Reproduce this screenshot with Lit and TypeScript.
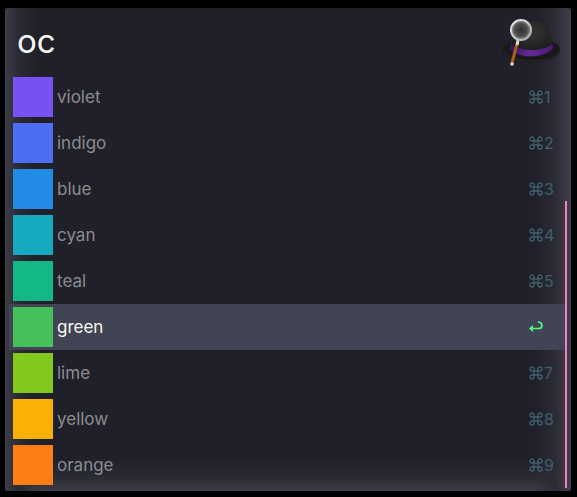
import { LitElement, html, css, svg } from "lit";
import { customElement, property, state } from "lit/decorators.js";
import { classMap } from "lit/directives/class-map.js";
import { styleMap } from "lit/directives/style-map.js";

interface Swatch {
  name: string;
  color: string;
}

const SWATCHES: Swatch[] = [
  { name: "violet", color: "#7950f2" },
  { name: "indigo", color: "#4c6ef5" },
  { name: "blue", color: "#228be6" },
  { name: "cyan", color: "#15aabf" },
  { name: "teal", color: "#12b886" },
  { name: "green", color: "#44c15a" },
  { name: "lime", color: "#82c91e" },
  { name: "yellow", color: "#fab005" },
  { name: "orange", color: "#fd7e14" },
];

const hatLogo = svg`
  <defs>
    <radialGradient id="crown" cx="0.5" cy="0.35" r="0.7">
      <stop offset="0" stop-color="#343635" />
      <stop offset="1" stop-color="#1a1b1b" />
    </radialGradient>
    <linearGradient id="band" x1="0" x2="1">
      <stop offset="0" stop-color="#3c1467" />
      <stop offset="0.45" stop-color="#652893" />
      <stop offset="1" stop-color="#491a76" />
    </linearGradient>
    <radialGradient id="lens">
      <stop offset="0" stop-color="#303030" />
      <stop offset="0.6" stop-color="#4c4c4c" />
      <stop offset="1" stop-color="#7c7c7c" />
    </radialGradient>
    <linearGradient id="rim" x1="0" y1="0" x2="1" y2="1">
      <stop offset="0" stop-color="#ececec" />
      <stop offset="1" stop-color="#a8a8a8" />
    </linearGradient>
  </defs>
  <path d="M4 38C4 34 8 31 13 30H53C58 31 61 34 61 38C61 45 48 50 33 50C17 50 4 45 4 38Z" fill="#181818" />
  <path d="M5 39C7 45 19 49 33 49C46 49 58 45 60 39" fill="none" stroke="#2b2c2c" stroke-width="1" />
  <path d="M12 34C13 18 20 9 33 9C46 9 53 17 53 33C46 42 19 42 12 34Z" fill="url(#crown)" />
  <path d="M12 32C21 40 44 40 53 32L54 36C46 47 19 47 11 37Z" fill="url(#band)" />
  <path d="M18 31L13 52" stroke="#2c170b" stroke-width="4" stroke-linecap="round" />
  <path d="M18 32L13 51" stroke="#a65f25" stroke-width="3" />
  <path d="M19 28L18 33" stroke="#dedede" stroke-width="3" />
  <circle cx="13" cy="52" r="1.8" fill="#dddddd" />
  <circle cx="22" cy="18" r="10" fill="url(#lens)" stroke="url(#rim)" stroke-width="2" />
  <circle cx="22" cy="18" r="8.6" fill="none" stroke="#8a8a8a" stroke-width="0.8" />
`;

@customElement("result-row")
class ResultRow extends LitElement {
  @property() name = "";
  @property() color = "";
  @property({ type: Number }) index = 1;
  @property({ type: Boolean }) selected = false;

  static styles = css`
    :host {
      display: block;
    }
    .row {
      display: flex;
      align-items: center;
      width: 100%;
      height: 46px;
      padding: 0 12px 0 4px;
      gap: 4px;
      border: 0;
      background: none;
      color: #8c8c8e;
      font: 17px/24px Inter, "Liberation Sans", sans-serif;
      text-align: left;
    }
    .selected {
      background: #414454;
      color: #f8f8f2;
    }
    .chip {
      width: 40px;
      height: 40px;
    }
    .name {
      flex: 1;
    }
    .shortcut {
      display: flex;
      align-items: center;
      gap: 1px;
      width: 24px;
      color: #40606c;
      font-size: 16px;
    }
    .selected .shortcut {
      color: #50fa7b;
    }
    .icon {
      flex: none;
      fill: none;
      stroke: currentColor;
    }
  `;

  render() {
    return html`
      <button class=${classMap({ row: true, selected: this.selected })}>
        <span class="chip" style=${styleMap({ background: this.color })}></span>
        <span class="name">${this.name}</span>
        <span class="shortcut">${this.selected ? this.enter() : this.command()}</span>
      </button>
    `;
  }

  private enter() {
    return html`<svg class="icon" width="15" height="14" viewBox="0 0 15 14" aria-label="Return">
      <path d="M9.5 2C14 2.5 14 8.5 9.5 8.5H3" stroke-width="1.7" stroke-linecap="round" />
      <path d="M0 8.5L4 5V12Z" fill="currentColor" stroke="none" />
    </svg>`;
  }

  private command() {
    return html`<svg class="icon" width="14" height="14" viewBox="0 0 14 14" aria-label="Command">
        <path
          d="M5 5V3A2 2 0 1 0 3 5H11A2 2 0 1 0 9 3V11A2 2 0 1 0 11 9H3A2 2 0 1 0 5 11Z"
          stroke-width="1.3"
        /></svg
      ><span>${this.index}</span>`;
  }
}

@customElement("app-root")
class AppRoot extends LitElement {
  @state() private selected = 5;

  static styles = css`
    :host {
      display: block;
      box-sizing: border-box;
      min-height: 100vh;
      padding: 8px 6px 6px 5px;
      background: #000;
    }
    .panel {
      position: relative;
      padding: 0 6px 3px 4px;
      border-radius: 2px;
      background:
        linear-gradient(to right, #3d3d47, #2a2a34 14px, transparent 32px),
        linear-gradient(to left, #40404a, #2b2b35 16px, transparent 36px),
        linear-gradient(to top, #3d3d47, #2a2a34 14px, transparent 32px),
        #20202a;
    }
    .header {
      display: flex;
      align-items: center;
      height: 66px;
      padding: 0 4px 0 8px;
    }
    .query {
      flex: 1;
      min-width: 0;
      padding: 0;
      border: 0;
      outline: 0;
      background: none;
      color: #f8f8f2;
      font: 400 33px/40px Inter, "Liberation Sans", sans-serif;
    }
    .results {
      margin: 0;
      padding: 0;
      list-style: none;
    }
    .scrollbar {
      position: absolute;
      right: 4px;
      bottom: 3px;
      width: 2px;
      height: 287px;
      background: #ff79c6;
    }
  `;

  render() {
    return html`
      <main class="panel">
        <header class="header">
          <input class="query" aria-label="Search" value="oc" />
          <svg width="62" height="58" viewBox="0 0 62 58" aria-hidden="true">${hatLogo}</svg>
        </header>
        <ul class="results">
          ${SWATCHES.map(
            (s, i) => html`<li>
              <result-row
                .name=${s.name}
                .color=${s.color}
                .index=${i + 1}
                .selected=${i === this.selected}
                @click=${() => (this.selected = i)}
              ></result-row>
            </li>`,
          )}
        </ul>
        <div class="scrollbar"></div>
      </main>
    `;
  }
}
